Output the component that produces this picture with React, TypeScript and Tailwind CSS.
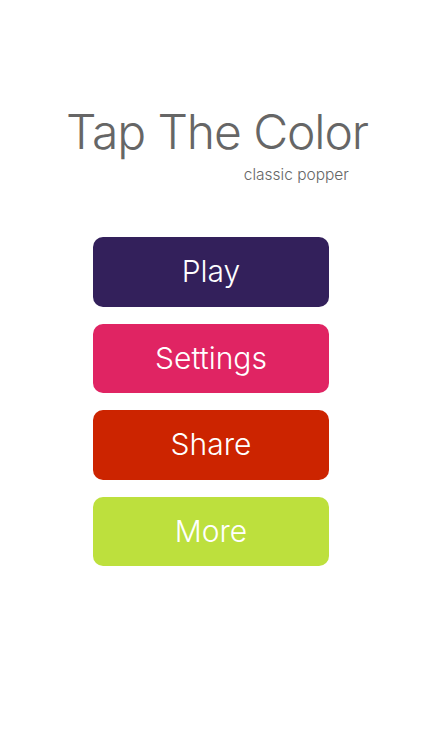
export default function App() {
  const buttons = [
    { label: "Play", bg: "bg-[#33205b]" },
    { label: "Settings", bg: "bg-[#e02463]" },
    { label: "Share", bg: "bg-[#cc2400]" },
    { label: "More", bg: "bg-[#bde03d]" },
  ];
  return (
    <div
      className="w-[422px] h-[750px] bg-white flex flex-col items-center"
      style={{ fontFamily: "Inter, 'DejaVu Sans', sans-serif" }}
    >
      <div className="mt-[102px] flex flex-col items-center">
        <h1 className="text-[48px] leading-[60px] font-light text-[#666666] tracking-[-1.1px] ml-[12px]">
          Tap The Color
        </h1>
        <p className="self-end mr-[19px] mt-[3px] text-[15.5px] leading-[20px] font-light text-[#666666]">
          classic popper
        </p>
      </div>
      <div className="mt-[52px] flex flex-col gap-[17px]">
        {buttons.map((b) => (
          <button
            key={b.label}
            className={`w-[236px] h-[69.5px] rounded-[10px] ${b.bg} text-white text-[30px] font-light flex items-center justify-center`}
          >
            {b.label}
          </button>
        ))}
      </div>
    </div>
  );
}
